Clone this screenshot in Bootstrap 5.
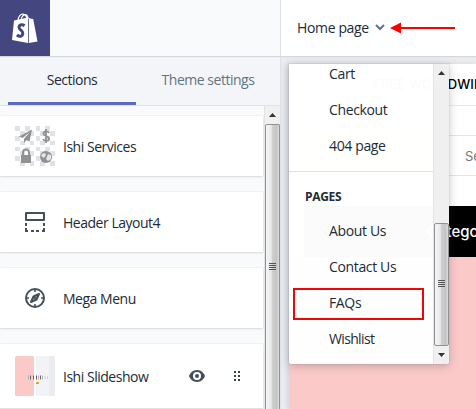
<!DOCTYPE html>
<html lang="en">
<head>
<meta charset="utf-8">
<meta name="viewport" content="width=device-width, initial-scale=1">
<title>Theme editor</title>
<link href="https://cdn.jsdelivr.net/npm/bootstrap@5.3.0/dist/css/bootstrap.min.css" rel="stylesheet">
<style>
body{font-family:"Open Sans","Noto Sans",sans-serif;font-size:14px;line-height:20px;color:#212b36;letter-spacing:-.48px;background:#f4f5f7;white-space:nowrap}
.editor{width:476px;height:409px}
.side-pane{width:280px;background:#f9fafb}
.stage{background:#ebecf0;border-left:1px solid #dfe1e7}
.top-strip{height:56px;background:#f9fafc;box-shadow:0 1px 1px #d5d7dc;z-index:1}
.stage .top-strip{background:#fff;padding-left:16px;padding-bottom:1px}
.page-name{width:71px;letter-spacing:-.36px}
.brand{width:50px;height:56px;background:#43467f}
.tab-strip{height:50px;background:#f4f5f8;border-bottom:1px solid #dfe3e8;padding:1px 0 0 8px}
.tab-strip .nav-link{width:128px;height:48px;padding:13px 0 0;text-align:center;color:#637381;border-bottom:3px solid transparent;border-radius:0}
.tab-strip .nav-link+.nav-link{width:144px}
.tab-strip .nav-link.active{color:#212b36;border-color:#5c6ac4}
.sections{width:263px;padding-top:10px;gap:16px}
.section-row{height:60px;background:#fff;box-shadow:0 0 1px #cdd0d6,0 1px 2px #d9dce0;padding-left:15px;flex:none}
.section-row>span{padding-top:2px}
.section-row:last-child{height:64px}
.thumb-box{width:40px;margin-right:8px}
.track{width:16px;background:#f0f0f0;border-left:1px solid #e4e4e4}
.arrow-cell{height:18px}
.grip-bar{background:linear-gradient(90deg,#f5f5f5,#e8e9ea 40%,#cfcfd1 50%,#c4c4c6 80%,#dcdcde);border:1px solid #929294;border-radius:2px}
.side-pane .grip-bar{border-bottom:0;border-radius:2px 2px 0 0}
.preview{margin:8px 0 0 8px;background:#fff;font-family:Inter,"Open Sans",sans-serif;letter-spacing:0;box-shadow:-2px 0 4px #d4d5d9}
.promo{height:42px;border-bottom:1px solid #e9e9e9;padding:0 0 1px 84px;color:#000;font-weight:500;font-size:13px;letter-spacing:.1px}
.gap-row{height:30px;border-bottom:1px solid #e5e5e5}
.search-row{height:40px;border-bottom:1px solid #e5e5e5;color:#777;font-size:12px;margin-left:15px}
.search-hint{padding-left:33px;font-size:13px}
.offer{width:128px;background:#f5dc8c;color:#d7bd69;padding-left:15px}
.menu-band{height:51px;margin:30px 0 0 15px;background:#000;color:#fff;font-weight:500;font-size:15px;padding-left:123px}
.hero{background:#fbc9c8}
.page-menu{position:absolute;left:289px;top:64px;width:160px;height:300px;background:rgba(255,255,255,.985);border-radius:0 0 3px 3px;box-shadow:0 0 0 1px rgba(60,60,70,.06),0 2px 10px rgba(33,43,54,.25);z-index:2;overflow:hidden}
.page-menu .list-link{display:flex;align-items:center;height:36px;padding-left:40px;color:#212b36;text-decoration:none;letter-spacing:-.36px}
.page-menu .list-link.snug{letter-spacing:-.65px}
.page-menu .first-group{margin-top:-8px;height:116px;border-bottom:1px solid #dfe3e8}
.group-title{font-size:12px;font-weight:700;height:41px;padding:9px 0 0 16px;letter-spacing:-.3px}
.page-menu .marked{height:32px;margin:3px 9px 1px 4px;padding:0 0 2px 34px;border:2px solid #f00505}
svg{display:block;flex:none}
</style>
</head>
<body class="overflow-hidden">
<div class="editor d-flex position-relative overflow-hidden">
  <aside class="side-pane d-flex flex-column flex-shrink-0">
    <header class="top-strip flex-shrink-0">
      <div class="brand d-flex align-items-center justify-content-center">
        <svg width="26" height="32" viewBox="0 0 26 32"><path d="M2 8.500 16 5.500V31L0 28Z" fill="#fff"/><path d="M16.800 5.500 18 6.600l3.200.5L25.500 29.500 16.800 31Z" fill="#fff"/><path d="M6 9C6 4 9 1.800 11 2.200S14.500 4 15 7M9 8C9.500 4.500 12 2 14 2.700S16 5 16 7" fill="none" stroke="#fff" stroke-width="1.200"/><path d="M12.600 13.600C9.500 11.800 6.800 13 7.100 15.600 7.400 18.200 11 18.500 10.800 21.500 10.600 24.600 7.500 25 4.900 23" fill="none" stroke="#43467f" stroke-width="3"/></svg>
      </div>
    </header>
    <nav class="tab-strip nav flex-nowrap flex-shrink-0">
      <a class="nav-link active" href="#">Sections</a>
      <a class="nav-link" href="#">Theme settings</a>
    </nav>
    <div class="d-flex flex-grow-1 justify-content-between overflow-hidden">
      <div class="sections d-flex flex-column">
        <div class="section-row d-flex align-items-center">
          <div class="thumb-box"><svg width="40" height="40" viewBox="0 0 40 40">
            <defs><pattern id="chk" width="10" height="10" patternUnits="userSpaceOnUse"><path d="M0 0h5v5H0zM5 5h5v5H5z" fill="#dfe3e8"/></pattern></defs>
            <path d="M0 0h19v19H0zM21 0h19v19H21zM0 21h19v19H0zM21 21h19v19H21z" fill="url(#chk)"/>
            <g fill="#919191"><path d="M17 3.500 4 10.500l3.500 1.500L15 6 9 13v4l2.500-3 3 1.500Z"/><path d="M6 29h10v8H6Z"/><circle cx="31" cy="31" r="6"/></g>
            <path d="M8 29v-2.500a3 3 0 0 1 6 0V29" fill="none" stroke="#919191" stroke-width="2"/>
            <path d="M34 7C33 4.500 28.500 4.800 28.500 7.500 28.500 10.500 34 9.500 34 12.700 34 15.500 29 15.500 28 13M31 3v14" fill="none" stroke="#919191" stroke-width="1.800"/>
            <path d="m27 28 3-1 1 2-2 3-3-2zM33 28l3 1v4l-3 2-2-2z" fill="#e4e5e8"/></svg></div>
          <span>Ishi Services</span>
        </div>
        <div class="section-row d-flex align-items-center">
          <div class="thumb-box"><svg class="mx-auto" width="20" height="20" viewBox="0 0 20 20" fill="none" stroke="#454f5b" stroke-width="2"><path d="M1 1h18v7H1z" stroke-linejoin="round"/><path d="M1 11v3M1 16v3h2M6 19h3M11 19h3M17 19h2v-3M19 14v-3"/></svg></div>
          <span>Header Layout4</span>
        </div>
        <div class="section-row d-flex align-items-center">
          <div class="thumb-box"><svg class="mx-auto" width="20" height="20" viewBox="0 0 20 20" fill="none" stroke="#454f5b" stroke-width="2"><circle cx="10" cy="10" r="9"/><path d="M10 1v3M10 16v3M1 10h3M16 10h3" stroke-width="1.600"/><path d="M14 6 8.500 8.500 6 14l5.500-2.500Z" stroke-linejoin="round"/><circle cx="10" cy="10" r=".6"/></svg></div>
          <span>Mega Menu</span>
        </div>
        <div class="section-row d-flex align-items-center">
          <div class="thumb-box"><svg width="40" height="40" viewBox="0 0 40 40"><rect width="19" height="40" rx="1.500" fill="#fbc9c8"/><rect x="21" width="19" height="40" rx="1.500" fill="#f2f3f7"/><path d="M34 0h4.500a1.500 1.500 0 0 1 1.500 1.500v37a1.500 1.500 0 0 1-1.500 1.500H34z" fill="#ebecf2"/><path d="M15.500 19.500v4M18.500 19.500v4M21.500 19.500v4M25.500 19.500v4" stroke="#6b6669" stroke-width="1"/><path d="M13.500 19.500v4M23.500 19.500v4M27.500 19.500v4" stroke="#b5b1b5"/><path d="M30 20v3M32.500 20v3" stroke="#d3d3d9"/><path d="M21 26h3v2h-3z" fill="#e0a526"/></svg></div>
          <span>Ishi Slideshow</span>
          <svg class="ms-auto" width="16" height="12" viewBox="0 0 16 12"><path d="M8 0C4 0 1.200 2.800 0 6c1.200 3.200 4 6 8 6s6.800-2.800 8-6c-1.200-3.200-4-6-8-6Z" fill="#454f5b"/><circle cx="8" cy="6" r="3" fill="#454f5b" stroke="#fff" stroke-width="2"/></svg>
          <svg style="margin:0 23px 0 29px" width="6" height="10" viewBox="0 0 6 10" fill="#363e49"><path d="M0 0h2v2H0zM4 0h2v2H4zM0 4h2v2H0zM4 4h2v2H4zM0 8h2v2H0zM4 8h2v2H4z"/></svg>
        </div>
      </div>
      <div class="track d-flex flex-column">
        <div class="arrow-cell d-flex align-items-center justify-content-center"><svg width="7" height="4"><path d="M0 4 3.500 0 7 4z" fill="#333"/></svg></div>
        <div class="grip-bar flex-grow-1 d-flex align-items-center justify-content-center"><svg width="7" height="9"><path d="M0 .5h7M0 2.500h7M0 4.500h7M0 6.500h7" stroke="#555"/></svg></div>
      </div>
    </div>
  </aside>
  <main class="stage d-flex flex-column flex-grow-1 overflow-hidden">
    <header class="top-strip d-flex align-items-center flex-shrink-0">
      <span class="page-name">Home page</span>
      <svg style="margin-left:7px" width="10" height="7" viewBox="0 0 10 7"><path d="m1 1 4 4 4-4" fill="none" stroke="#637381" stroke-width="2"/></svg>
      <svg style="margin-left:5px" width="66" height="12" viewBox="0 0 66 12"><path d="M0 6 11 .5v11z" fill="red"/><path d="M10 6h55" stroke="red" stroke-width="2"/></svg>
    </header>
    <section class="preview d-flex flex-column flex-grow-1">
      <div class="promo d-flex align-items-center">FREE WORLDWIDE</div>
      <div class="gap-row"></div>
      <div class="search-row d-flex align-items-stretch"><div class="offer d-flex align-items-center flex-shrink-0">1000+ PRODUCTS</div><div class="search-hint d-flex align-items-center">Search</div></div>
      <div class="menu-band d-flex align-items-center">Categories</div>
      <div class="hero flex-grow-1"></div>
    </section>
  </main>
  <div class="page-menu d-flex">
    <div class="flex-grow-1">
      <div class="first-group">
        <a class="list-link" href="#">Cart</a>
        <a class="list-link" href="#">Checkout</a>
        <a class="list-link" href="#">404 page</a>
      </div>
      <div class="group-title d-flex align-items-center">PAGES</div>
      <a class="list-link" href="#">About Us</a>
      <a class="list-link" href="#">Contact Us</a>
      <a class="list-link marked" href="#">FAQs</a>
      <a class="list-link snug" href="#">Wishlist</a>
    </div>
    <div class="track d-flex flex-column">
      <div class="arrow-cell d-flex align-items-center justify-content-center"><svg width="7" height="4"><path d="M0 4 3.500 0 7 4z" fill="#333"/></svg></div>
      <div class="flex-grow-1"></div>
      <div class="grip-bar d-flex align-items-center justify-content-center" style="height:123px"><svg width="7" height="9"><path d="M0 .5h7M0 2.500h7M0 4.500h7M0 6.500h7" stroke="#555"/></svg></div>
      <div class="arrow-cell d-flex align-items-center justify-content-center"><svg width="7" height="4"><path d="M0 0 3.500 4 7 0z" fill="#333"/></svg></div>
    </div>
  </div>
</div>
<script src="https://cdn.jsdelivr.net/npm/bootstrap@5.3.0/dist/js/bootstrap.bundle.min.js"></script>
</body>
</html>
